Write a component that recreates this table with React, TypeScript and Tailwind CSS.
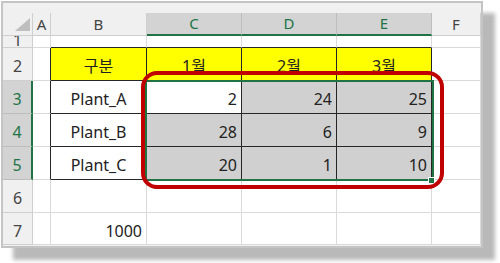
import React from "react";

const font = { fontFamily: '"Noto Sans", "Noto Sans CJK KR", sans-serif' };

type CellProps = { className?: string; children?: React.ReactNode };

function Cell({ className = "", children }: CellProps) {
  return <div className={`flex overflow-hidden border-r border-b ${className}`}>{children}</div>;
}

const colHead = "items-center justify-center bg-[#f0f0f0] border-[#cfcfcf] text-[15px] text-[#444]";
const colHeadSel = "items-center justify-center bg-[#d3d3d3] border-r-[#bdbdbd] border-b-2 border-b-[#217346] text-[15px] text-[#217346]";
const rowHead = "items-center justify-center bg-[#f0f0f0] border-[#cfcfcf] text-[16px] text-[#444] pt-1";
const rowHeadSel = "items-center justify-center bg-[#d3d3d3] border-b-[#bdbdbd] border-r-2 border-r-[#217346] text-[16px] text-[#217346] pt-1";
const grid = "bg-white border-[#dadada]";
const dark = "border-[#262626]";
const num = "items-center justify-end pr-1 pt-1 text-[16px] text-[#222]";
const name = "items-center justify-center pt-1 text-[16px] text-[#222]";
const head = "items-center justify-center pt-1 bg-[#ffff00] text-[16px] text-[#222]";

export default function App() {
  return (
    <div className="w-[500px] h-[263px] bg-white overflow-hidden" style={font}>
      <div className="relative ml-px mt-px w-[482px] h-[247px] border-2 border-[#c4c4c4] bg-[#f0f0f0] shadow-[12px_12px_4px_#b9b9b9] overflow-hidden">
        <div className="mt-[10px] grid grid-cols-[30px_18px_96px_95px_95px_95px_1fr] grid-rows-[23px_12px_33px_33px_33px_33px_33px_32px]">
          {/* column headers */}
          <Cell className="relative bg-[#f0f0f0] border-[#cfcfcf]">
            <svg className="absolute left-0 top-0" width="30" height="23" viewBox="0 0 30 23">
              <polygon points="27,5 27,18 12,18" fill="#bfbfbf" />
            </svg>
          </Cell>
          <Cell className={colHead}>A</Cell>
          <Cell className={colHead}>B</Cell>
          <Cell className={colHeadSel}>C</Cell>
          <Cell className={colHeadSel}>D</Cell>
          <Cell className={colHeadSel}>E</Cell>
          <Cell className={colHead}>F</Cell>

          {/* row 1 */}
          <Cell className="items-start justify-center bg-[#f0f0f0] border-[#cfcfcf] text-[16px] leading-[12px] text-[#444]">
            <span className="-mt-[2px]">1</span>
          </Cell>
          <Cell className={grid} />
          <Cell className={`bg-white border-r-[#dadada] border-b-[#262626]`} />
          <Cell className={`bg-white border-r-[#dadada] border-b-[#262626]`} />
          <Cell className={`bg-white border-r-[#dadada] border-b-[#262626]`} />
          <Cell className={`bg-white border-r-[#dadada] border-b-[#262626]`} />
          <Cell className={grid} />

          {/* row 2 */}
          <Cell className={rowHead}>2</Cell>
          <Cell className={`bg-white border-r-[#262626] border-b-[#dadada]`} />
          <Cell className={`${head} ${dark}`}>구분</Cell>
          <Cell className={`${head} ${dark}`}>1월</Cell>
          <Cell className={`${head} ${dark}`}>2월</Cell>
          <Cell className={`${head} ${dark}`}>3월</Cell>
          <Cell className={grid} />

          {/* row 3 */}
          <Cell className={rowHeadSel}>3</Cell>
          <Cell className={`bg-white border-r-[#262626] border-b-[#dadada]`} />
          <Cell className={`${name} bg-white ${dark}`}>Plant_A</Cell>
          <Cell className={`${num} bg-white ${dark}`}>2</Cell>
          <Cell className={`${num} bg-[#d0d0d0] ${dark}`}>24</Cell>
          <Cell className={`${num} bg-[#d0d0d0] ${dark}`}>25</Cell>
          <Cell className={grid} />

          {/* row 4 */}
          <Cell className={rowHeadSel}>4</Cell>
          <Cell className={`bg-white border-r-[#262626] border-b-[#dadada]`} />
          <Cell className={`${name} bg-white ${dark}`}>Plant_B</Cell>
          <Cell className={`${num} bg-[#d0d0d0] ${dark}`}>28</Cell>
          <Cell className={`${num} bg-[#d0d0d0] ${dark}`}>6</Cell>
          <Cell className={`${num} bg-[#d0d0d0] ${dark}`}>9</Cell>
          <Cell className={grid} />

          {/* row 5 */}
          <Cell className={rowHeadSel}>5</Cell>
          <Cell className={`bg-white border-r-[#262626] border-b-[#dadada]`} />
          <Cell className={`${name} bg-white ${dark}`}>Plant_C</Cell>
          <Cell className={`${num} bg-[#d0d0d0] ${dark}`}>20</Cell>
          <Cell className={`${num} bg-[#d0d0d0] ${dark}`}>1</Cell>
          <Cell className={`${num} bg-[#d0d0d0] ${dark}`}>10</Cell>
          <Cell className={grid} />

          {/* row 6 */}
          <Cell className={rowHead}>6</Cell>
          <Cell className={grid} />
          <Cell className={grid} />
          <Cell className={grid} />
          <Cell className={grid} />
          <Cell className={grid} />
          <Cell className={grid} />

          {/* row 7 */}
          <Cell className={rowHead}>7</Cell>
          <Cell className={grid} />
          <Cell className={`${num} ${grid}`}>1000</Cell>
          <Cell className={grid} />
          <Cell className={grid} />
          <Cell className={grid} />
          <Cell className={grid} />
        </div>

        {/* selection range C3:E5 */}
        <div className="absolute left-[142px] top-[77px] w-[289px] h-[101px] border-2 border-[#217346]" />
        <div className="absolute left-[425px] top-[174px] w-[7px] h-[7px] bg-[#217346] border border-white" />

        {/* red highlight */}
        <div className="absolute left-[138px] top-[68px] w-[303px] h-[118px] border-4 border-[#c00000] rounded-[16px]" />
      </div>
    </div>
  );
}
